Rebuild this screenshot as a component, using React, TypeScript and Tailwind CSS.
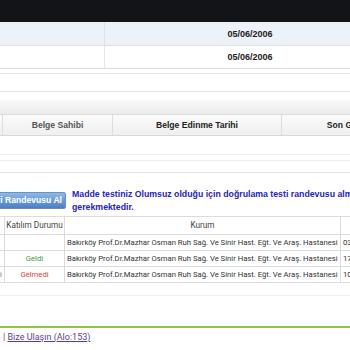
import React from "react";

export default function App() {
  const kurum = "Bakırköy Prof.Dr.Mazhar Osman Ruh Sağ. Ve Sinir Hast. Eğt. Ve Araş. Hastanesi";
  const rows = [
    { d: "", c: "", k: kurum, n: "03", pre: "" },
    { d: "Geldi", c: "text-[#3c9a3c]", k: kurum, n: "17", pre: "" },
    { d: "Gelmedi", c: "text-[#e23b3b]", k: kurum, n: "10", pre: "i" },
  ];
  return (
    <div className="w-[350px] h-[350px] overflow-hidden bg-white font-['Roboto',sans-serif] text-[#222]">
      <div className="h-[22px] bg-[#131417]" />
      {/* info rows */}
      <div className="flex h-[24px] bg-[#edf1f8] border-b border-[#dcdfe4]">
        <div className="w-[105px] shrink-0 border-r border-[#dfe2e7]" />
        <div className="w-[290px] shrink-0 pt-[2px] flex items-center justify-center text-[9px] font-bold font-['Liberation_Sans',sans-serif]">05/06/2006</div>
      </div>
      <div className="flex h-[23px] border-b border-[#dcdcdc]">
        <div className="w-[105px] shrink-0 border-r border-[#e6e6e6]" />
        <div className="w-[290px] shrink-0 pt-[2px] flex items-center justify-center text-[9px] font-bold font-['Liberation_Sans',sans-serif]">05/06/2006</div>
      </div>
      <div className="h-[5px] border-b border-[#e8e8e8]" />
      <div className="h-[18px] border-b border-[#e6e6e6]" />
      <div className="h-[8px]" />
      <div className="h-[15px] bg-gradient-to-b from-[#f8f8f8] to-[#ebebeb] border-b border-[#dedede]" />
      {/* header */}
      <div className="flex h-[21px] w-[640px] bg-gradient-to-b from-[#fbfbfb] to-[#efefef] border-b border-[#d8d8d8] text-[8.6px] font-bold font-['Liberation_Sans',sans-serif]">
        <div className="w-[3px] shrink-0 border-r border-[#dddddd]" />
        <div className="w-[110px] shrink-0 border-r border-[#dddddd] flex items-center justify-center text-[#555]">Belge Sahibi</div>
        <div className="w-[169px] shrink-0 border-r border-[#dddddd] flex items-center justify-center text-[#222]">Belge Edinme Tarihi</div>
        <div className="w-[172px] shrink-0 flex items-center justify-center text-[#222]">Son Geçerlilik Tarihi</div>
      </div>
      <div className="h-[19px] border-b border-[#ececec]" />
      <div className="h-[6px] border-b border-[#ececec]" />
      <div className="h-[12px] border-b border-[#e4e4e4]" />
      {/* randevu */}
      <div className="flex items-start mt-[15px] w-[600px]">
        <div className="shrink-0 mt-[4px] -ml-[24px] w-[90px] h-[17px] pr-[3px] flex items-center justify-end rounded-[2px] border border-[#6f8fb8] bg-gradient-to-b from-[#8fb8e8] to-[#4a7fc6] text-white text-[8.6px] font-bold font-['Liberation_Sans',sans-serif] whitespace-nowrap">
          Testi Randevusu Al
        </div>
        <div className="ml-[6px] text-[#2323c4] text-[8.75px] leading-[13px] font-bold font-['Liberation_Sans',sans-serif] whitespace-nowrap">
          Madde testiniz Olumsuz olduğu için doğrulama testi randevusu alması
          <br />
          gerekmektedir.
        </div>
      </div>
      {/* table 2 */}
      <div className="mt-[2px] w-[700px] text-[7.7px] text-[#333]">
        <div className="flex h-[19px] border-y border-[#dcdcdc] text-[#444] text-[8.2px]">
          <div className="w-[5px] shrink-0 border-r border-[#dcdcdc]" />
          <div className="w-[60px] shrink-0 border-r border-[#dcdcdc] flex items-center justify-center">Katılım Durumu</div>
          <div className="w-[276px] shrink-0 border-r border-[#dcdcdc] flex items-center justify-center">Kurum</div>
          <div className="w-[60px] shrink-0" />
        </div>
        {rows.map((r, i) => (
          <div key={i} className="flex h-[16px] border-b border-[#dcdcdc]">
            <div className="w-[5px] shrink-0 border-r border-[#dcdcdc] flex items-center text-[#777]">{r.pre}</div>
            <div className={`w-[60px] shrink-0 border-r border-[#dcdcdc] flex items-center justify-center ${r.c}`}>{r.d}</div>
            <div className="w-[276px] shrink-0 border-r border-[#dcdcdc] flex items-center pl-[2px] whitespace-nowrap">{r.k}</div>
            <div className="w-[60px] shrink-0 flex items-center pl-[2px]">{r.n}/04/2019</div>
          </div>
        ))}
      </div>
      <div className="h-[13px] border-b border-[#f0f0f0]" />
      <div className="h-[30px]" />
      <div className="h-[2px] bg-[#8cc63f]" />
      <div className="pt-[3px] pl-[3px] text-[9px] text-[#555] font-['Roboto',sans-serif]">
        | <span className="underline text-[#5b3f94]">Bize Ulaşın (Alo:153)</span>
      </div>
    </div>
  );
}
